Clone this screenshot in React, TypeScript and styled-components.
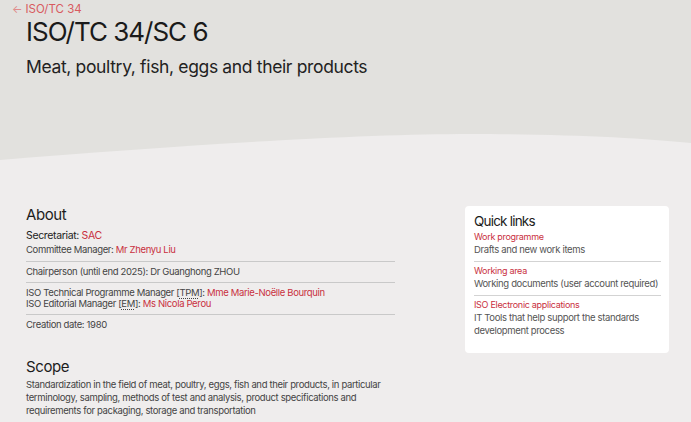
import React from "react";
import styled, { createGlobalStyle } from "styled-components";

const Global = createGlobalStyle`
  html, body { margin: 0; padding: 0; }
  body {
    background: #efeded;
    font-family: Inter, "Noto Sans", "Liberation Sans", sans-serif;
    color: #1c1c1c;
    width: 691px;
    height: 422px;
    overflow: hidden;
  }
`;

const RED = "#c9303e";

const Page = styled.div`
  width: 691px;
  min-height: 422px;
  background: #efeded;
`;

const Hero = styled.header`
  background: #e2e1de;
  padding: 2px 26px 0 26px;
  height: 97px;
  box-sizing: border-box;
`;

const Breadcrumb = styled.a`
  display: flex;
  align-items: center;
  gap: 3px;
  margin-left: -14px;
  font-size: 11.5px;
  line-height: 15px;
  color: #d85a5e;
  text-decoration: none;
`;

const Arrow = styled.span`
  font-size: 11px;
  color: #e08a8a;
`;

const Title = styled.h1`
  margin: 0;
  font-size: 26px;
  line-height: 30px;
  font-weight: 400;
  letter-spacing: -1px;
  color: #1a1a1a;
`;

const Subtitle = styled.h2`
  margin: 9px 0 0 0;
  font-size: 17.5px;
  line-height: 22px;
  font-weight: 400;
  letter-spacing: -0.35px;
  color: #222;
`;

const Wave = styled.svg`
  display: block;
  width: 691px;
  height: 68px;
  background: #e2e1de;
`;

const Main = styled.main`
  display: flex;
  justify-content: space-between;
  padding: 40px 22px 0 26px;
`;

const Left = styled.section`
  width: 369px;
`;

const H3 = styled.h3<{ $top?: number; $bottom?: number }>`
  margin: ${(p) => p.$top ?? 0}px 0 ${(p) => p.$bottom ?? 5}px 0;
  font-size: 15px;
  line-height: 19px;
  font-weight: 400;
  letter-spacing: -0.4px;
  color: #1c1c1c;
`;

const Secretariat = styled.div`
  font-size: 10.5px;
  line-height: 14px;
  letter-spacing: -0.35px;
  color: #222;
`;

const Row = styled.div<{ $border?: boolean; $first?: boolean }>`
  font-size: 9.5px;
  line-height: 11px;
  letter-spacing: -0.35px;
  color: #444;
  padding: ${(p) => (p.$first ? "1px 0 6px 0" : "4px 0 5px 0")};
  border-bottom: ${(p) => (p.$border ? "1px solid #c9c9c9" : "none")};
`;

const Link = styled.a`
  color: ${RED};
  text-decoration: none;
`;

const Abbr = styled.abbr`
  text-decoration: underline dotted;
  text-underline-offset: 2px;
`;

const ScopeText = styled.p`
  margin: 0;
  font-size: 9.5px;
  line-height: 13px;
  letter-spacing: -0.35px;
  color: #444;
`;

const Card = styled.aside`
  width: 204px;
  box-sizing: border-box;
  background: #fff;
  border-radius: 4px;
  padding: 6px 8px 11px 9px;
  align-self: flex-start;
  margin-top: 1px;
`;

const CardTitle = styled.h4`
  margin: 0;
  font-size: 13.5px;
  line-height: 18px;
  font-weight: 400;
  letter-spacing: -0.8px;
  color: #1c1c1c;
`;

const QuickItem = styled.div<{ $border?: boolean; $first?: boolean }>`
  padding: ${(p) => (p.$first ? "0" : "2px")} 0 5px 0;
  border-bottom: ${(p) => (p.$border ? "1px solid #d3d3d3" : "none")};
`;

const QuickLink = styled.a`
  display: block;
  font-size: 9px;
  line-height: 13px;
  letter-spacing: -0.3px;
  color: ${RED};
  text-decoration: none;
`;

const QuickDesc = styled.div`
  font-size: 9.5px;
  line-height: 13px;
  letter-spacing: -0.35px;
  color: #555;
`;

export default function App() {
  return (
    <Page>
      <Global />
      <Hero>
        <Breadcrumb href="#">
          <Arrow>←</Arrow>ISO/TC 34
        </Breadcrumb>
        <Title>ISO/TC 34/SC 6</Title>
        <Subtitle>Meat, poultry, fish, eggs and their products</Subtitle>
      </Hero>
      <Wave viewBox="0 0 691 68" preserveAspectRatio="none">
        <path
          d="M0,63 C180,48 360,37 470,37 C570,37 640,41 691,46 L691,68 L0,68 Z"
          fill="#efeded"
        />
      </Wave>
      <Main>
        <Left>
          <H3>About</H3>
          <Secretariat>
            Secretariat: <Link href="#">SAC</Link>
          </Secretariat>
          <Row $border $first>
            Committee Manager: <Link href="#">Mr Zhenyu Liu</Link>
          </Row>
          <Row $border>Chairperson (until end 2025): Dr Guanghong ZHOU</Row>
          <Row $border>
            ISO Technical Programme Manager [<Abbr>TPM</Abbr>]:{" "}
            <Link href="#">Mme Marie-Noëlle Bourquin</Link>
            <br />
            ISO Editorial Manager [<Abbr>EM</Abbr>]:{" "}
            <Link href="#">Ms Nicola Perou</Link>
          </Row>
          <Row>Creation date: 1980</Row>
          <H3 $top={22} $bottom={2}>
            Scope
          </H3>
          <ScopeText>
            Standardization in the field of meat, poultry, eggs, fish and their
            products, in particular terminology, sampling, methods of test and
            analysis, product specifications and requirements for packaging,
            storage and transportation
          </ScopeText>
        </Left>
        <Card>
          <CardTitle>Quick links</CardTitle>
          <QuickItem $border $first>
            <QuickLink href="#">Work programme</QuickLink>
            <QuickDesc>Drafts and new work items</QuickDesc>
          </QuickItem>
          <QuickItem $border>
            <QuickLink href="#">Working area</QuickLink>
            <QuickDesc>Working documents (user account required)</QuickDesc>
          </QuickItem>
          <QuickItem>
            <QuickLink href="#">ISO Electronic applications</QuickLink>
            <QuickDesc>
              IT Tools that help support the standards development process
            </QuickDesc>
          </QuickItem>
        </Card>
      </Main>
    </Page>
  );
}
